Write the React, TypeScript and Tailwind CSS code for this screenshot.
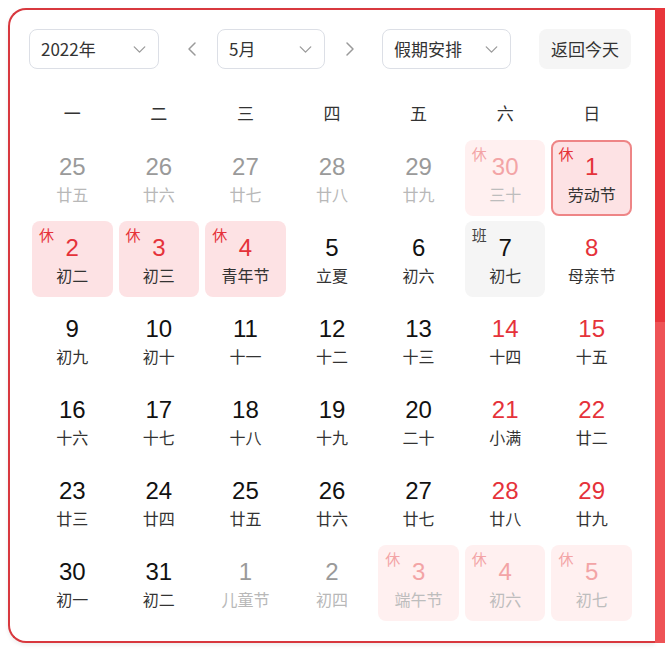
import React from "react";
import { ChevronDown, ChevronLeft, ChevronRight } from "lucide-react";

type Cell = {
  n: number;
  l: string;
  kind?: "other" | "hol" | "holOther" | "work" | "sel";
  red?: boolean;
};

const rows: Cell[][] = [
  [
    { n: 25, l: "廿五", kind: "other" },
    { n: 26, l: "廿六", kind: "other" },
    { n: 27, l: "廿七", kind: "other" },
    { n: 28, l: "廿八", kind: "other" },
    { n: 29, l: "廿九", kind: "other" },
    { n: 30, l: "三十", kind: "holOther" },
    { n: 1, l: "劳动节", kind: "sel" },
  ],
  [
    { n: 2, l: "初二", kind: "hol" },
    { n: 3, l: "初三", kind: "hol" },
    { n: 4, l: "青年节", kind: "hol" },
    { n: 5, l: "立夏" },
    { n: 6, l: "初六" },
    { n: 7, l: "初七", kind: "work" },
    { n: 8, l: "母亲节", red: true },
  ],
  [
    { n: 9, l: "初九" },
    { n: 10, l: "初十" },
    { n: 11, l: "十一" },
    { n: 12, l: "十二" },
    { n: 13, l: "十三" },
    { n: 14, l: "十四", red: true },
    { n: 15, l: "十五", red: true },
  ],
  [
    { n: 16, l: "十六" },
    { n: 17, l: "十七" },
    { n: 18, l: "十八" },
    { n: 19, l: "十九" },
    { n: 20, l: "二十" },
    { n: 21, l: "小满", red: true },
    { n: 22, l: "廿二", red: true },
  ],
  [
    { n: 23, l: "廿三" },
    { n: 24, l: "廿四" },
    { n: 25, l: "廿五" },
    { n: 26, l: "廿六" },
    { n: 27, l: "廿七" },
    { n: 28, l: "廿八", red: true },
    { n: 29, l: "廿九", red: true },
  ],
  [
    { n: 30, l: "初一" },
    { n: 31, l: "初二" },
    { n: 1, l: "儿童节", kind: "other" },
    { n: 2, l: "初四", kind: "other" },
    { n: 3, l: "端午节", kind: "holOther" },
    { n: 4, l: "初六", kind: "holOther" },
    { n: 5, l: "初七", kind: "holOther" },
  ],
];

const weekdays = ["一", "二", "三", "四", "五", "六", "日"];

function DayCell({ c }: { c: Cell }) {
  let box = "";
  let num = "text-[#111]";
  let lunar = "text-[#333]";
  let tag: React.ReactNode = null;
  switch (c.kind) {
    case "other":
      num = "text-[#9a9a9a]";
      lunar = "text-[#b8b8b8]";
      break;
    case "hol":
      box = "bg-[#fde2e4]";
      num = "text-[#e5323a]";
      tag = <span className="absolute left-[7px] top-[6px] text-[15px] leading-none text-[#e5323a]">休</span>;
      break;
    case "holOther":
      box = "bg-[#fff0f0]";
      num = "text-[#f3a4a6]";
      lunar = "text-[#bdbdbd]";
      tag = <span className="absolute left-[7px] top-[6px] text-[15px] leading-none text-[#f3a4a6]">休</span>;
      break;
    case "sel":
      box = "bg-[#fde2e4] border-2 border-[#ee8586]";
      num = "text-[#e5323a]";
      tag = <span className="absolute left-[5px] top-[4px] text-[15px] leading-none text-[#e5323a]">休</span>;
      break;
    case "work":
      box = "bg-[#f5f5f5]";
      tag = <span className="absolute left-[7px] top-[6px] text-[15px] leading-none text-[#444]">班</span>;
      break;
  }
  if (c.red) num = "text-[#e5323a]";
  const sel = c.kind === "sel";
  return (
    <div className={`relative h-[76px] rounded-[8px] flex flex-col items-center ${box}`}>
      {tag}
      <div
        className={`${sel ? "mt-[12px]" : "mt-[14px]"} h-[26px] leading-[26px] text-[24px] ${num}`}
        style={{ fontFamily: '"Liberation Sans", Arial, sans-serif' }}
      >
        {c.n}
      </div>
      <div className={`mt-[4px] text-[16px] leading-[20px] ${lunar}`}>{c.l}</div>
    </div>
  );
}

function Select({ label, width }: { label: string; width: string }) {
  return (
    <div
      className={`h-[40px] ${width} flex items-center justify-between pl-[11px] pr-[8px] border border-[#dcdfe6] rounded-[8px] bg-white`}
    >
      <span className="text-[17px] text-[#333]">{label}</span>
      <ChevronDown size={21} strokeWidth={1.5} color="#9a9a9a" />
    </div>
  );
}

export default function App() {
  return (
    <div
      className="w-[665px] h-[651px] bg-white overflow-hidden"
      style={{ fontFamily: '"Noto Sans CJK SC", "Liberation Sans", sans-serif' }}
    >
      <div className="flex pt-[8px] pl-[8px]">
        <div className="w-[647px] h-[635px] border-2 border-r-0 border-[#d8383e] rounded-l-[18px] bg-white pt-[19px] pl-[19px] shadow-[0_2px_4px_rgba(0,0,0,0.08)]">
          <div className="flex items-center">
            <Select label="2022年" width="w-[130px]" />
            <ChevronLeft size={24} strokeWidth={1.5} color="#9a9a9a" className="ml-[21px]" />
            <div className="ml-[13px]">
              <Select label="5月" width="w-[108px]" />
            </div>
            <ChevronRight size={24} strokeWidth={1.5} color="#9a9a9a" className="ml-[13px]" />
            <div className="ml-[20px]">
              <Select label="假期安排" width="w-[129px]" />
            </div>
            <div className="ml-[28px] h-[40px] w-[92px] rounded-[8px] bg-[#f5f5f5] flex items-center justify-center text-[17px] text-[#333]">
              返回今天
            </div>
          </div>
          <div className="ml-[3px] w-[600px]">
            <div className="mt-[24px] h-[40px] mb-[7px] grid grid-cols-7 gap-x-[6px]">
              {weekdays.map((w) => (
                <div key={w} className="flex items-center justify-center text-[17px] text-[#333]">
                  {w}
                </div>
              ))}
            </div>
            <div className="grid grid-cols-7 gap-x-[6px] gap-y-[5px]">
              {rows.flat().map((c, i) => (
                <DayCell key={i} c={c} />
              ))}
            </div>
          </div>
        </div>
        <div className="w-[10px] h-[635px] flex flex-col">
          <div className="h-[314px] bg-[#e8363b]" />
          <div className="flex-1 bg-[#ee5356]" />
        </div>
      </div>
    </div>
  );
}
